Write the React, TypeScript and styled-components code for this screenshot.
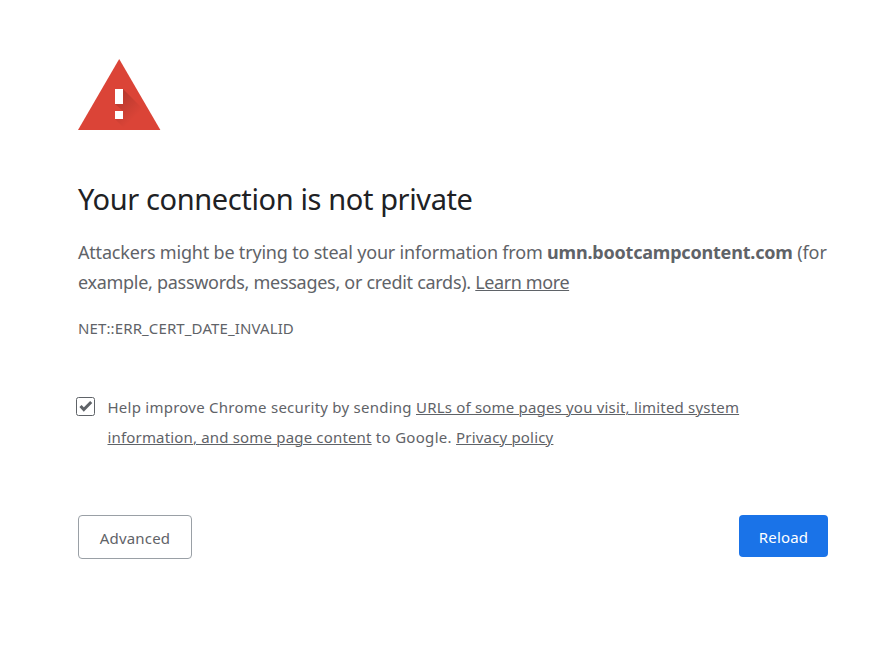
import React from 'react';
import styled, { createGlobalStyle } from 'styled-components';

const GlobalStyle = createGlobalStyle`
  * { box-sizing: border-box; }
  body { margin: 0; background: #fff; color: #5f6368; font-family: "Noto Sans", "Open Sans", sans-serif; }
`;

const Page = styled.main`
  display: flex;
  flex-direction: column;
  width: 828px;
  height: 647px;
  padding: 59px 0 0 78px;
`;

const WarningIcon = styled.svg`
  display: block;
  width: 83px;
  height: 71px;
`;

const Title = styled.h1`
  margin: 47px 0 0;
  height: 44px;
  font-size: 29px;
  font-weight: 400;
  line-height: 44px;
  color: #202124;
  letter-spacing: -0.38px;
  white-space: nowrap;
`;

const Message = styled.p`
  margin: 16px 0 0;
  font-size: 18px;
  line-height: 30px;
  white-space: nowrap;
`;

const Code = styled.div`
  margin-top: 16px;
  font-size: 15px;
  letter-spacing: 0.12px;
  line-height: 30px;
  white-space: nowrap;
`;

const OptIn = styled.label`
  display: flex;
  gap: 12.5px;
  margin: 49px 0 0 -2px;
  font-size: 15px;
  line-height: 30px;
  white-space: nowrap;
`;

const CheckIcon = styled.svg`
  flex: none;
  width: 19px;
  height: 19px;
  margin-top: 5px;
`;

const Text = styled.span<{ $spacing?: number }>`
  letter-spacing: ${p => p.$spacing ?? 0}px;
`;

const Host = styled.strong`
  font-weight: 700;
  letter-spacing: -0.2px;
`;

const Link = styled.a<{ $spacing?: number }>`
  color: inherit;
  letter-spacing: ${p => p.$spacing ?? 0}px;
  text-decoration: underline;
  text-decoration-thickness: 1px;
`;

const Actions = styled.div`
  display: flex;
  justify-content: space-between;
  align-items: flex-start;
  margin-top: 63px;
`;

const Button = styled.button<{ $primary?: boolean }>`
  width: ${p => (p.$primary ? 89 : 114)}px;
  height: ${p => (p.$primary ? 42 : 44)}px;
  padding: 2px 0 0;
  border: ${p => (p.$primary ? '0' : '1px solid #9aa0a6')};
  border-radius: 4px;
  background: ${p => (p.$primary ? '#1a73e8' : '#fff')};
  color: ${p => (p.$primary ? '#fff' : '#5f6368')};
  font: 400 15px "Noto Sans", "Open Sans", sans-serif;
  letter-spacing: 0.2px;
`;

export default function App() {
  return (
    <>
      <GlobalStyle />
      <Page>
        <WarningIcon viewBox="0 0 83 71">
          <defs>
            <linearGradient id="shade" gradientUnits="userSpaceOnUse" x1="41" y1="38" x2="59" y2="56">
              <stop offset="0" stopColor="#000" stopOpacity=".16" />
              <stop offset="1" stopColor="#000" stopOpacity="0" />
            </linearGradient>
          </defs>
          <path d="M41.2 0 82.4 71H0z" fill="#db4437" />
          <path d="M45 30 68.5 53.5 78.7 71H48L37 60V52h8l-8-7z" fill="url(#shade)" />
          <path d="M37 30h8v15h-8zM37 52h8v8h-8z" fill="#fff" />
        </WarningIcon>
        <Title>Your connection is not private</Title>
        <Message>
          <Text $spacing={-0.19}>Attackers might be trying to steal your information from </Text>
          <Host>umn.bootcampcontent.com</Host>
          <Text $spacing={-0.1}> (for</Text>
          <br />
          <Text $spacing={-0.29}>example, passwords, messages, or credit cards). </Text>
          <Link $spacing={-0.4}>Learn more</Link>
        </Message>
        <Code>NET::ERR_CERT_DATE_INVALID</Code>
        <OptIn>
          <CheckIcon viewBox="0 0 19 19">
            <rect x=".5" y=".5" width="18" height="18" rx="2" fill="#fff" stroke="#5f6368" />
            <path d="m4.5 9 3.3 3.5L15.2 5" fill="none" stroke="#5f6368" strokeWidth="3" />
          </CheckIcon>
          <span>
            <Text $spacing={0.25}>Help improve Chrome security by sending </Text>
            <Link $spacing={0.19}>URLs of some pages you visit, limited system</Link>
            <br />
            <Link $spacing={0.17}>information, and some page content</Link>
            <Text $spacing={0.3}> to Google. </Text>
            <Link $spacing={0.18}>Privacy policy</Link>
          </span>
        </OptIn>
        <Actions>
          <Button>Advanced</Button>
          <Button $primary>Reload</Button>
        </Actions>
      </Page>
    </>
  );
}
